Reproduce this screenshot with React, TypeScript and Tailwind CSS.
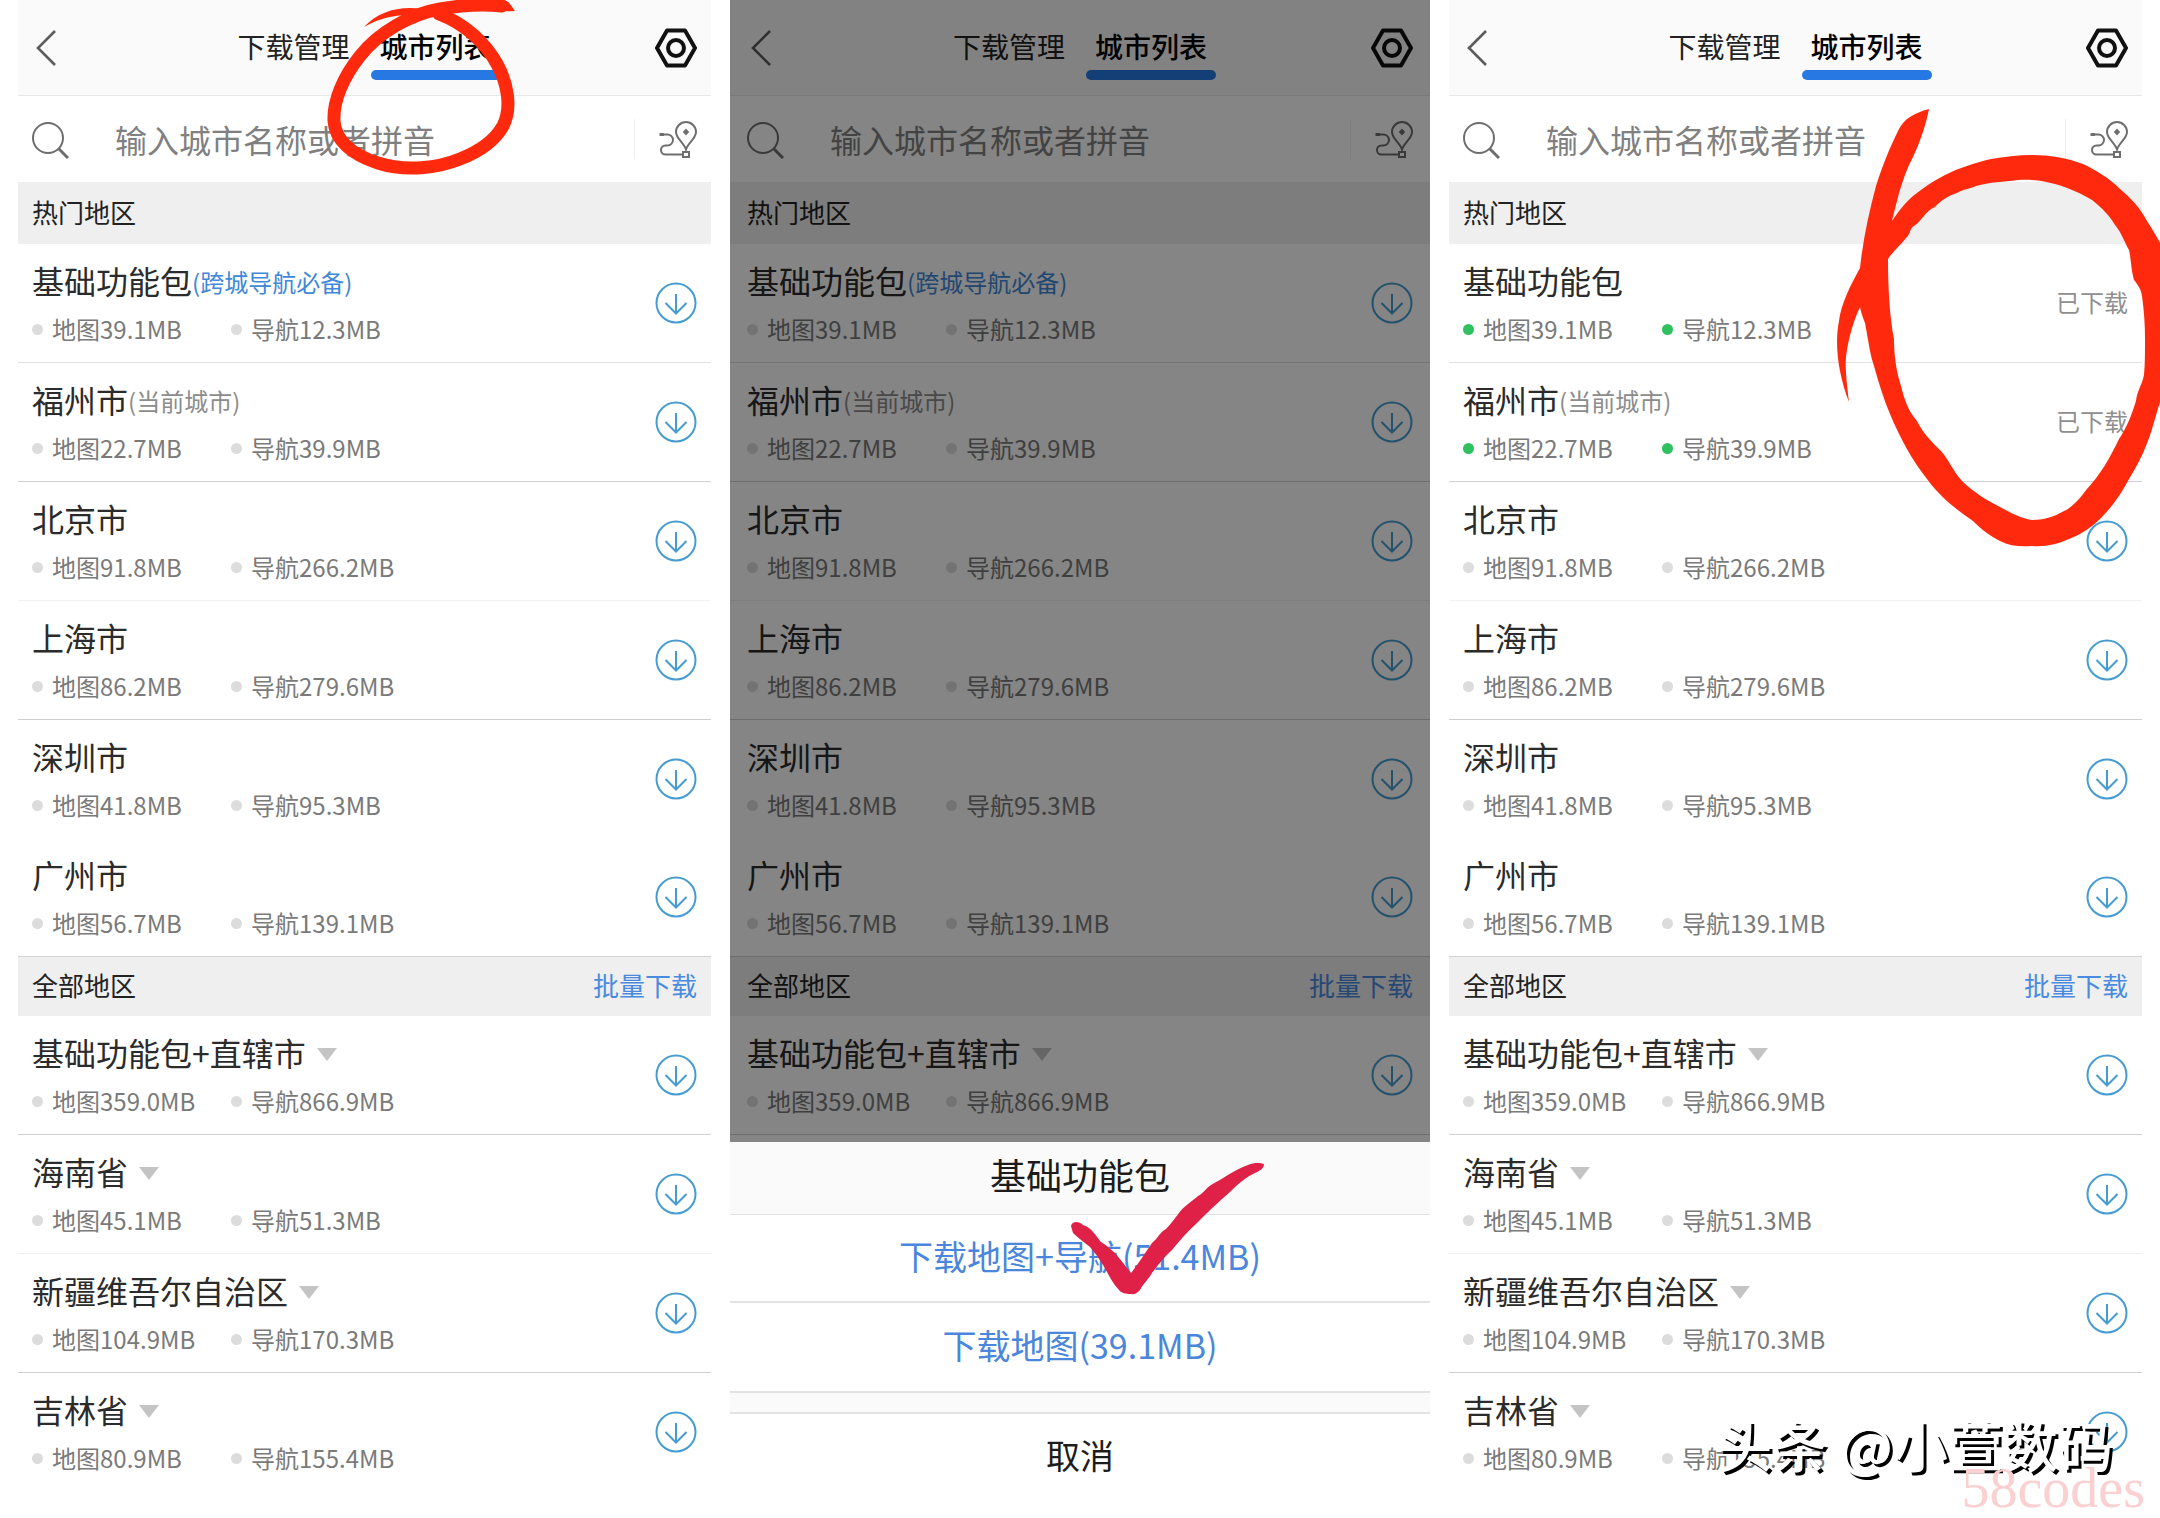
import React from "react";

type Row = {
  name: string;
  note?: string;
  noteTone?: "blue" | "gray";
  map: string;
  nav: string;
  done?: boolean;
  expandable?: boolean;
  line?: "soft" | "strong" | "faint";
};

const hot: Row[] = [
  { name: "基础功能包", note: "(跨城导航必备)", noteTone: "blue", map: "39.1MB", nav: "12.3MB", line: "soft" },
  { name: "福州市", note: "(当前城市)", noteTone: "gray", map: "22.7MB", nav: "39.9MB", line: "strong" },
  { name: "北京市", map: "91.8MB", nav: "266.2MB", line: "faint" },
  { name: "上海市", map: "86.2MB", nav: "279.6MB", line: "strong" },
  { name: "深圳市", map: "41.8MB", nav: "95.3MB" },
  { name: "广州市", map: "56.7MB", nav: "139.1MB" },
];

const hotDownloaded: Row[] = hot.map((r, i) =>
  i === 0 ? { ...r, note: undefined, done: true } : i === 1 ? { ...r, done: true } : r
);

const all: Row[] = [
  { name: "基础功能包+直辖市", map: "359.0MB", nav: "866.9MB", expandable: true, line: "strong" },
  { name: "海南省", map: "45.1MB", nav: "51.3MB", expandable: true, line: "faint" },
  { name: "新疆维吾尔自治区", map: "104.9MB", nav: "170.3MB", expandable: true, line: "strong" },
  { name: "吉林省", map: "80.9MB", nav: "155.4MB", expandable: true },
];

const lineClass = {
  soft: "border-b border-[#e2e2e2]",
  strong: "border-b border-[#cfcfcf]",
  faint: "border-b border-[#f1f1f1]",
};

function BackIcon() {
  return (
    <svg className="ml-[3px] h-[36px] w-[22px]" viewBox="0 0 22 36" fill="none" stroke="#5c5c5c" strokeWidth="2.6">
      <path d="M20 1 3 18l17 17" />
    </svg>
  );
}

function HexIcon() {
  return (
    <svg className="h-[40px] w-[43px]" viewBox="0 0 43 40" fill="none" stroke="#111" strokeWidth="4" strokeLinejoin="round">
      <path d="M13 2.500h18L41 20 31 37.500H13L3 20z" />
      <circle cx="22" cy="20" r="8" />
    </svg>
  );
}

function SearchIcon() {
  return (
    <svg className="mt-[2px] h-[37px] w-[37px]" viewBox="0 0 37 37" fill="none" stroke="#6e6e6e" strokeWidth="2">
      <circle cx="16" cy="16" r="15" />
      <path d="m26.500 26.500 9.500 9.500" strokeWidth="3" />
    </svg>
  );
}

function RouteIcon() {
  return (
    <svg className="mt-[2px] h-[38px] w-[38px]" viewBox="0 0 38 38" fill="none" stroke="#6e6e6e" strokeWidth="2">
      <path d="M27 28.500C25 22 17 17.500 17 11a10 10 0 0 1 20 0c0 6.500-8 11-10 17.500z" />
      <path d="m27 7.500 3.200 3.500-3.200 3.500-3.200-3.500z" fill="#6e6e6e" stroke="none" />
      <path d="M1 13.500h4M2 12v3" strokeWidth="3" />
      <path d="M2 13.500h6.500a5.500 5.500 0 0 1 0 11H6.500a4.500 4.500 0 0 0 0 9H24" />
      <path d="M24 31h6v5h-6z" />
    </svg>
  );
}

function DownloadIcon() {
  return (
    <svg className="h-[42px] w-[42px]" viewBox="0 0 42 42" fill="none" stroke="#469cd0" strokeWidth="2">
      <circle cx="21" cy="21" r="19.500" />
      <path d="M21 12v19M10.500 21 21 31.500 31.500 21" />
    </svg>
  );
}

function Meta({ label, done }: { label: string; done?: boolean }) {
  return (
    <span className="flex w-[199px] items-center gap-[9px]">
      <span className={done ? "size-[11px] rounded-full bg-[#2fc05f]" : "size-[11px] rounded-full bg-[#dcdcdc]"} />
      <span className="whitespace-nowrap">{label}</span>
    </span>
  );
}

function CityRow({ row, pad }: { row: Row; pad: string }) {
  return (
    <li className={`${row.line ? lineClass[row.line] : ""}`}>
      <div className={`flex h-[118px] items-center justify-between ${pad}`}>
        <div>
          <div className="flex h-[38px] items-center text-[32px] leading-[38px] text-[#2b2b2b]">
            <span>{row.name}</span>
            {row.note && (
              <span
                className={
                  row.noteTone === "blue" ? "pt-[4px] text-[24px] text-[#4088d8]" : "pt-[4px] text-[24px] text-[#8c8c8c]"
                }
              >
                {row.note}
              </span>
            )}
            {row.expandable && (
              <button type="button" aria-label={`展开${row.name}`} className="ml-[11px] pt-[4px]">
                <svg className="h-[13px] w-[20px]" viewBox="0 0 20 13" fill="#c4c4c4">
                  <path d="M0 0h20L10 13z" />
                </svg>
              </button>
            )}
          </div>
          <div className="mt-[14px] flex h-[32px] text-[24px] leading-[32px] text-[#7a7a7a]">
            <Meta label={`地图${row.map}`} done={row.done} />
            <Meta label={`导航${row.nav}`} done={row.done} />
          </div>
        </div>
        {row.done ? (
          <span className="pb-[2px] text-[24px] text-[#8f8f8f]">已下载</span>
        ) : (
          <button type="button" aria-label={`下载${row.name}`}>
            <DownloadIcon />
          </button>
        )}
      </div>
    </li>
  );
}

type PhoneProps = { rows: Row[]; regions: Row[]; id: string; pad: string; sheet?: React.ReactNode };

function Phone({ rows, regions, id, pad, sheet }: PhoneProps) {
  return (
    <section className="flex flex-col bg-white">
      <div className={sheet ? "relative grow" : "grow"}>
        <header
          className={`grid h-[96px] grid-cols-[1fr_auto_1fr] items-center border-b border-[#e8e8e8] bg-[#fafafa] ${pad}`}
        >
          <button type="button" aria-label="返回" className="justify-self-start">
            <BackIcon />
          </button>
          <nav className="flex h-full gap-[12px] text-[28px] text-[#222]">
            <button type="button" className="px-[9px] pb-[4px]">下载管理</button>
            <button type="button" className="relative px-[9px] pb-[4px] font-medium text-black">
              城市列表
              <span className="absolute inset-x-0 bottom-[15px] h-[10px] rounded-full bg-[#2778e2]" />
            </button>
          </nav>
          <button type="button" aria-label="设置" className="justify-self-end">
            <HexIcon />
          </button>
        </header>

        <div className={`flex h-[86px] items-center ${pad}`}>
          <label htmlFor={id} aria-label="搜索">
            <SearchIcon />
          </label>
          <input
            id={id}
            type="text"
            placeholder="输入城市名称或者拼音"
            className="ml-[46px] h-[60px] min-w-0 flex-1 bg-transparent text-[32px] text-[#333] outline-none placeholder:text-[#808080]"
          />
          <span className="mr-[24px] h-[40px] w-px bg-[#f0f0f0]" />
          <button type="button" aria-label="路线">
            <RouteIcon />
          </button>
        </div>

        <h2 className={`flex h-[62px] items-center bg-[#efefef] pb-[3px] text-[26px] text-[#222] ${pad}`}>热门地区</h2>
        <ul>
          {rows.map((r) => (
            <CityRow key={r.name} row={r} pad={pad} />
          ))}
        </ul>

        <div
          className={`flex h-[60px] items-center justify-between border-t border-[#d4d4d4] bg-[#efefef] pb-[4px] text-[26px] ${pad}`}
        >
          <h2 className="text-[#222]">全部地区</h2>
          <button type="button" className="text-[#4a8be0]">批量下载</button>
        </div>
        <ul>
          {regions.map((r) => (
            <CityRow key={r.name} row={r} pad={pad} />
          ))}
        </ul>
        {sheet && <div className="absolute inset-0 bg-black/48" />}
      </div>
      {sheet}
    </section>
  );
}

function ActionSheet() {
  return (
    <div role="dialog" aria-label="基础功能包" className="flex h-[376px] flex-col bg-white">
      <h3 className="flex h-[73px] items-center justify-center border-b border-[#e2e2e2] bg-[#fafafa] pb-[8px] text-[36px] text-[#1c1c1c]">
        基础功能包
      </h3>
      <button type="button" className="h-[88px] border-b-2 border-[#e2e2e2] pb-[6px] text-[34px] text-[#4a86dc]">
        下载地图+导航(51.4MB)
      </button>
      <button type="button" className="h-[90px] border-b-2 border-[#e2e2e2] pb-[6px] text-[34px] text-[#4a86dc]">
        下载地图(39.1MB)
      </button>
      <div className="h-[21px] border-b-2 border-[#e2e2e2] bg-[#fafafa]" />
      <button type="button" className="h-[86px] pb-[6px] text-[34px] text-[#1c1c1c]">取消</button>
    </div>
  );
}

function Marks() {
  return (
    <svg className="pointer-events-none absolute inset-x-0 top-0 w-full" viewBox="0 0 2160 1518" aria-hidden="true">
      <g fill="none" stroke="#ff2a0e" strokeWidth="13" strokeLinecap="round" strokeLinejoin="round">
        <path d="M439 14C466 24 486 44 497 64C508 84 512 108 503 126C494 142 478 152 460 159C438 168 406 172 378 163C352 155 335 140 334 121C333 100 344 76 360 56C378 33 410 14 440 9C462 5 482 4 502 6" />
      </g>
      <path
        fill="#ff2a0e"
        d="M364 27C376 14 392 8 410 8C425 8 440 12 450 18C438 18 425 15 410 15C392 15 378 19 364 27ZM480 0C500 -2 508 0 510 4L515 11C500 12 486 9 470 11Z"
      />
      <path
        fill="#ff2a0e"
        fillRule="evenodd"
        d="M1929 109C1914 113 1904 119 1899 129C1889 149 1882 167 1876 186C1869 212 1863 240 1860 268C1851 284 1841 304 1839 321C1834 346 1839 376 1849 402C1847 384 1845 370 1846 357C1848 340 1853 322 1860 307C1862 316 1864 320 1865 323C1869 344 1870 354 1874 366C1879 384 1884 400 1890 414C1900 438 1912 460 1927 479C1941 498 1957 510 1973 521C1982 530 1990 536 2000 541C2010 546 2020 547 2032 546C2046 547 2058 544 2069 539C2082 534 2092 527 2101 518C2112 507 2121 494 2129 479C2139 463 2147 446 2152 429C2156 416 2159 404 2164 390L2164 250C2158 239 2153 230 2147 221C2140 208 2131 198 2120 189C2109 178 2096 170 2083 164C2067 158 2050 155 2032 155C2018 155 2004 157 1991 159C1974 163 1959 168 1945 175C1933 181 1923 188 1913 196C1904 204 1898 212 1892 221C1894 211 1897 202 1899 193C1903 180 1907 168 1913 157C1921 140 1926 124 1929 109ZM1888 259C1894 250 1900 246 1906 238C1911 234 1909 229 1914 226C1922 221 1925 211 1935 207C1941 200 1950 195 1957 193C1963 189 1970 189 1976 186C1990 182 2003 182 2018 180C2031 179 2044 181 2055 184C2069 188 2082 194 2092 200C2102 208 2110 216 2115 225C2121 232 2124 241 2129 250C2131 258 2131 270 2134 280C2138 285 2141 289 2142 296C2144 310 2145 325 2145 339C2145 352 2145 364 2144 375C2142 385 2137 391 2136 401C2131 417 2126 429 2119 439C2110 458 2100 475 2087 489C2080 498 2073 507 2064 511C2054 517 2043 520 2032 520C2020 518 2009 512 2000 507C1986 500 1974 492 1963 482C1953 472 1949 459 1940 450C1932 442 1922 432 1917 421C1908 411 1904 398 1901 386C1896 370 1894 355 1894 339C1890 320 1888 290 1888 259Z"
      />
      <path
        fill="#df2148"
        d="M1071 1226C1072 1221 1079 1221 1083 1225C1092 1228 1096 1236 1101 1242C1108 1246 1111 1250 1115 1253C1121 1260 1126 1267 1131 1273C1139 1263 1145 1253 1152 1243C1158 1238 1160 1232 1166 1229C1171 1224 1175 1218 1179 1213C1184 1206 1191 1202 1198 1196C1204 1193 1206 1188 1211 1185C1224 1178 1234 1170 1248 1165C1255 1162 1261 1163 1264 1164C1264 1169 1259 1171 1255 1173C1246 1177 1238 1184 1230 1192C1218 1202 1207 1213 1197 1223C1188 1231 1180 1240 1172 1250C1164 1257 1158 1265 1152 1273C1148 1280 1143 1284 1140 1290C1136 1294 1134 1295 1131 1294C1126 1294 1121 1293 1119 1290C1112 1283 1108 1273 1103 1265C1099 1258 1094 1252 1090 1247C1084 1242 1078 1238 1073 1233Z"
      />
    </svg>
  );
}

export default function App() {
  return (
    <main className="relative min-h-screen overflow-hidden bg-white px-[18px] font-['Noto_Sans_CJK_SC',sans-serif]">
      <div className="grid min-h-screen grid-cols-[693fr_700fr_693fr] gap-[19px]">
        <Phone rows={hot} regions={all} id="search-a" pad="px-[14px]" />
        <Phone rows={hot} regions={all.slice(0, 1)} id="search-b" pad="px-[17px]" sheet={<ActionSheet />} />
        <Phone rows={hotDownloaded} regions={all} id="search-c" pad="px-[14px]" />
      </div>
      <Marks />
      <p className="absolute right-[47px] bottom-[40px] text-[55px] leading-[70px] font-medium whitespace-nowrap text-white [text-shadow:3px_3px_0_#000]">
        头条 @小萱数码
      </p>
      <p className="absolute right-[15px] bottom-0 font-['Liberation_Serif',serif] text-[56px] leading-[60px] text-[#fbd0d0]">58codes</p>
    </main>
  );
}
